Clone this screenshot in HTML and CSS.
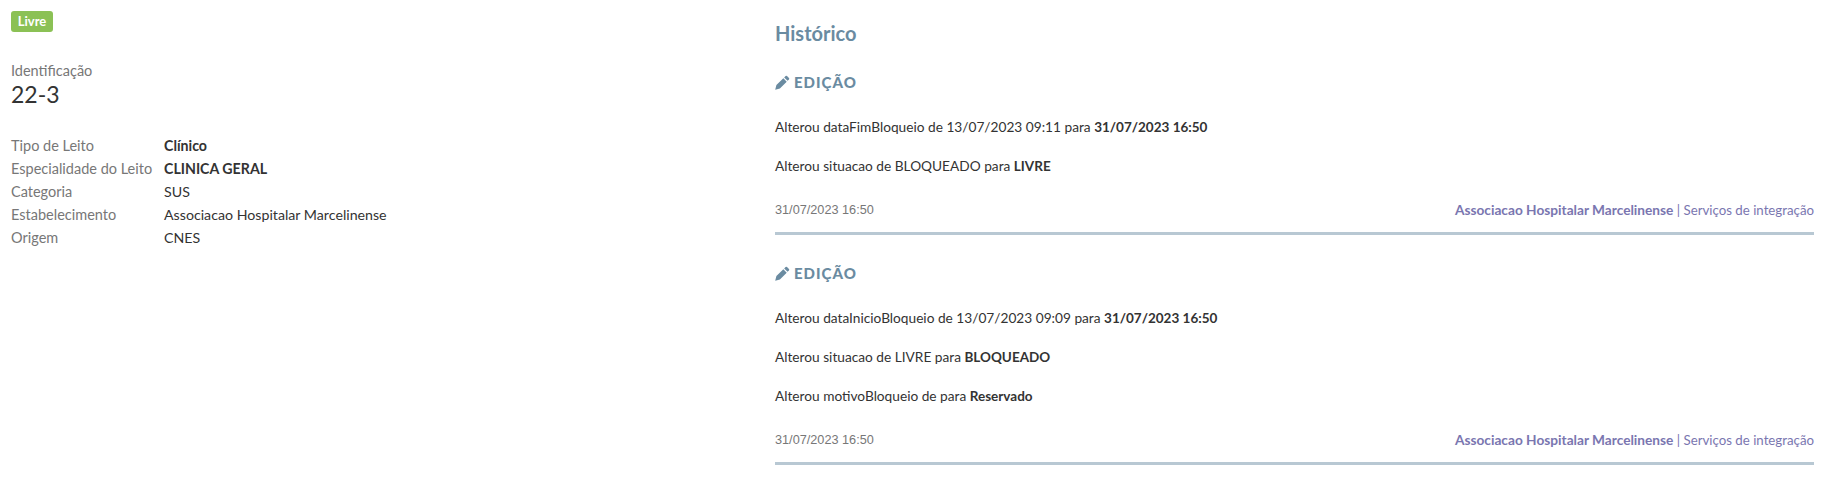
FILE: index.html
```html
<!DOCTYPE html>
<html lang="pt-BR">
<head>
    <meta charset="UTF-8">
    <title>Leito 22-3</title>
    <link rel="stylesheet" href="styles.css">
</head>
<body>
    <div class="page">
        <div class="bed">
            <span class="badge">Livre</span>
            <div class="ident">
                <div class="ident-label">Identificação</div>
                <div class="ident-value">22-3</div>
            </div>
            <dl class="details">
                <dt>Tipo de Leito</dt>
                <dd><strong>Clínico</strong></dd>
                <dt>Especialidade do Leito</dt>
                <dd><strong>CLINICA GERAL</strong></dd>
                <dt>Categoria</dt>
                <dd>SUS</dd>
                <dt>Estabelecimento</dt>
                <dd>Associacao Hospitalar Marcelinense</dd>
                <dt>Origem</dt>
                <dd>CNES</dd>
            </dl>
        </div>

        <div class="history">
            <h2>Histórico</h2>

            <div class="entry">
                <h3>
                    <svg class="pencil" viewBox="0 0 16 16"><path d="M11.3 1.1a1.1 1.1 0 0 1 1.5 0l2.1 2.1a1.1 1.1 0 0 1 0 1.5l-1.5 1.5-3.6-3.6zM8.9 3.5l3.6 3.6-7.3 7.3-5 1.3 1.3-5z"/></svg>
                    EDIÇÃO
                </h3>
                <p>Alterou dataFimBloqueio de 13/07/2023 09:11 para <strong>31/07/2023 16:50</strong></p>
                <p>Alterou situacao de BLOQUEADO para <strong>LIVRE</strong></p>
                <div class="entry-footer">
                    <span class="date">31/07/2023 16:50</span>
                    <span class="author"><strong>Associacao Hospitalar Marcelinense</strong> | Serviços de integração</span>
                </div>
            </div>

            <div class="entry">
                <h3>
                    <svg class="pencil" viewBox="0 0 16 16"><path d="M11.3 1.1a1.1 1.1 0 0 1 1.5 0l2.1 2.1a1.1 1.1 0 0 1 0 1.5l-1.5 1.5-3.6-3.6zM8.9 3.5l3.6 3.6-7.3 7.3-5 1.3 1.3-5z"/></svg>
                    EDIÇÃO
                </h3>
                <p>Alterou dataInicioBloqueio de 13/07/2023 09:09 para <strong>31/07/2023 16:50</strong></p>
                <p>Alterou situacao de LIVRE para <strong>BLOQUEADO</strong></p>
                <p>Alterou motivoBloqueio de para <strong>Reservado</strong></p>
                <div class="entry-footer">
                    <span class="date">31/07/2023 16:50</span>
                    <span class="author"><strong>Associacao Hospitalar Marcelinense</strong> | Serviços de integração</span>
                </div>
            </div>
        </div>
    </div>
</body>
</html>
```

FILE: styles.css
```css
body {
    margin: 0;
    background-color: #ffffff;
    color: #333333;
    font-family: "Lato", "Open Sans", sans-serif;
    font-size: 14px;
    line-height: 20px;
}

.page {
    display: grid;
    grid-template-columns: 760px 1fr;
}

/* Coluna do leito */
.bed {
    padding: 11px 0 0 11px;
}

.badge {
    display: block;
    width: 42px;
    height: 21px;
    line-height: 21px;
    text-align: center;
    background-color: #8bc155;
    border-radius: 3px;
    color: #ffffff;
    font-size: 13px;
    font-weight: 700;
}

.ident {
    margin-top: 29px;
}

.ident-label {
    color: #777777;
    font-size: 14.5px;
    line-height: 20px;
}

.ident-value {
    font-size: 23px;
    line-height: 26px;
}

.details {
    display: grid;
    grid-template-columns: 153px 1fr;
    grid-auto-rows: 23px;
    margin: 27px 0 0;
    align-items: center;
}

.details dt {
    color: #777777;
    font-size: 14.5px;
}

.details dd {
    margin: 0;
    font-size: 14.2px;
}

/* Coluna do histórico */
.history {
    padding: 20px 10px 0 15px;
}

.history h2 {
    margin: 0 0 26px;
    color: #6a8ba1;
    font-size: 20px;
    line-height: 26px;
    font-weight: 700;
}

.entry h3 {
    display: flex;
    align-items: center;
    gap: 4px;
    margin: 0 0 25px;
    color: #6a8ba1;
    font-size: 15px;
    line-height: 20px;
    font-weight: 900;
    letter-spacing: 1px;
}

.pencil {
    width: 15px;
    height: 15px;
    fill: #6a8ba1;
}

.entry p {
    margin: 0 0 19px;
    font-size: 13.7px;
}

.entry p strong {
    font-size: 13.5px;
}

.entry-footer {
    display: flex;
    justify-content: space-between;
    margin-top: 24px;
    padding-bottom: 12px;
    border-bottom: 3px solid #b8c8d3;
    margin-bottom: 28px;
}

.date {
    color: #777777;
    font-family: "Liberation Sans", sans-serif;
    font-size: 12.7px;
}

.author {
    color: #7a76b0;
    font-size: 13.25px;
}

.author strong {
    font-size: 13.7px;
}
```
